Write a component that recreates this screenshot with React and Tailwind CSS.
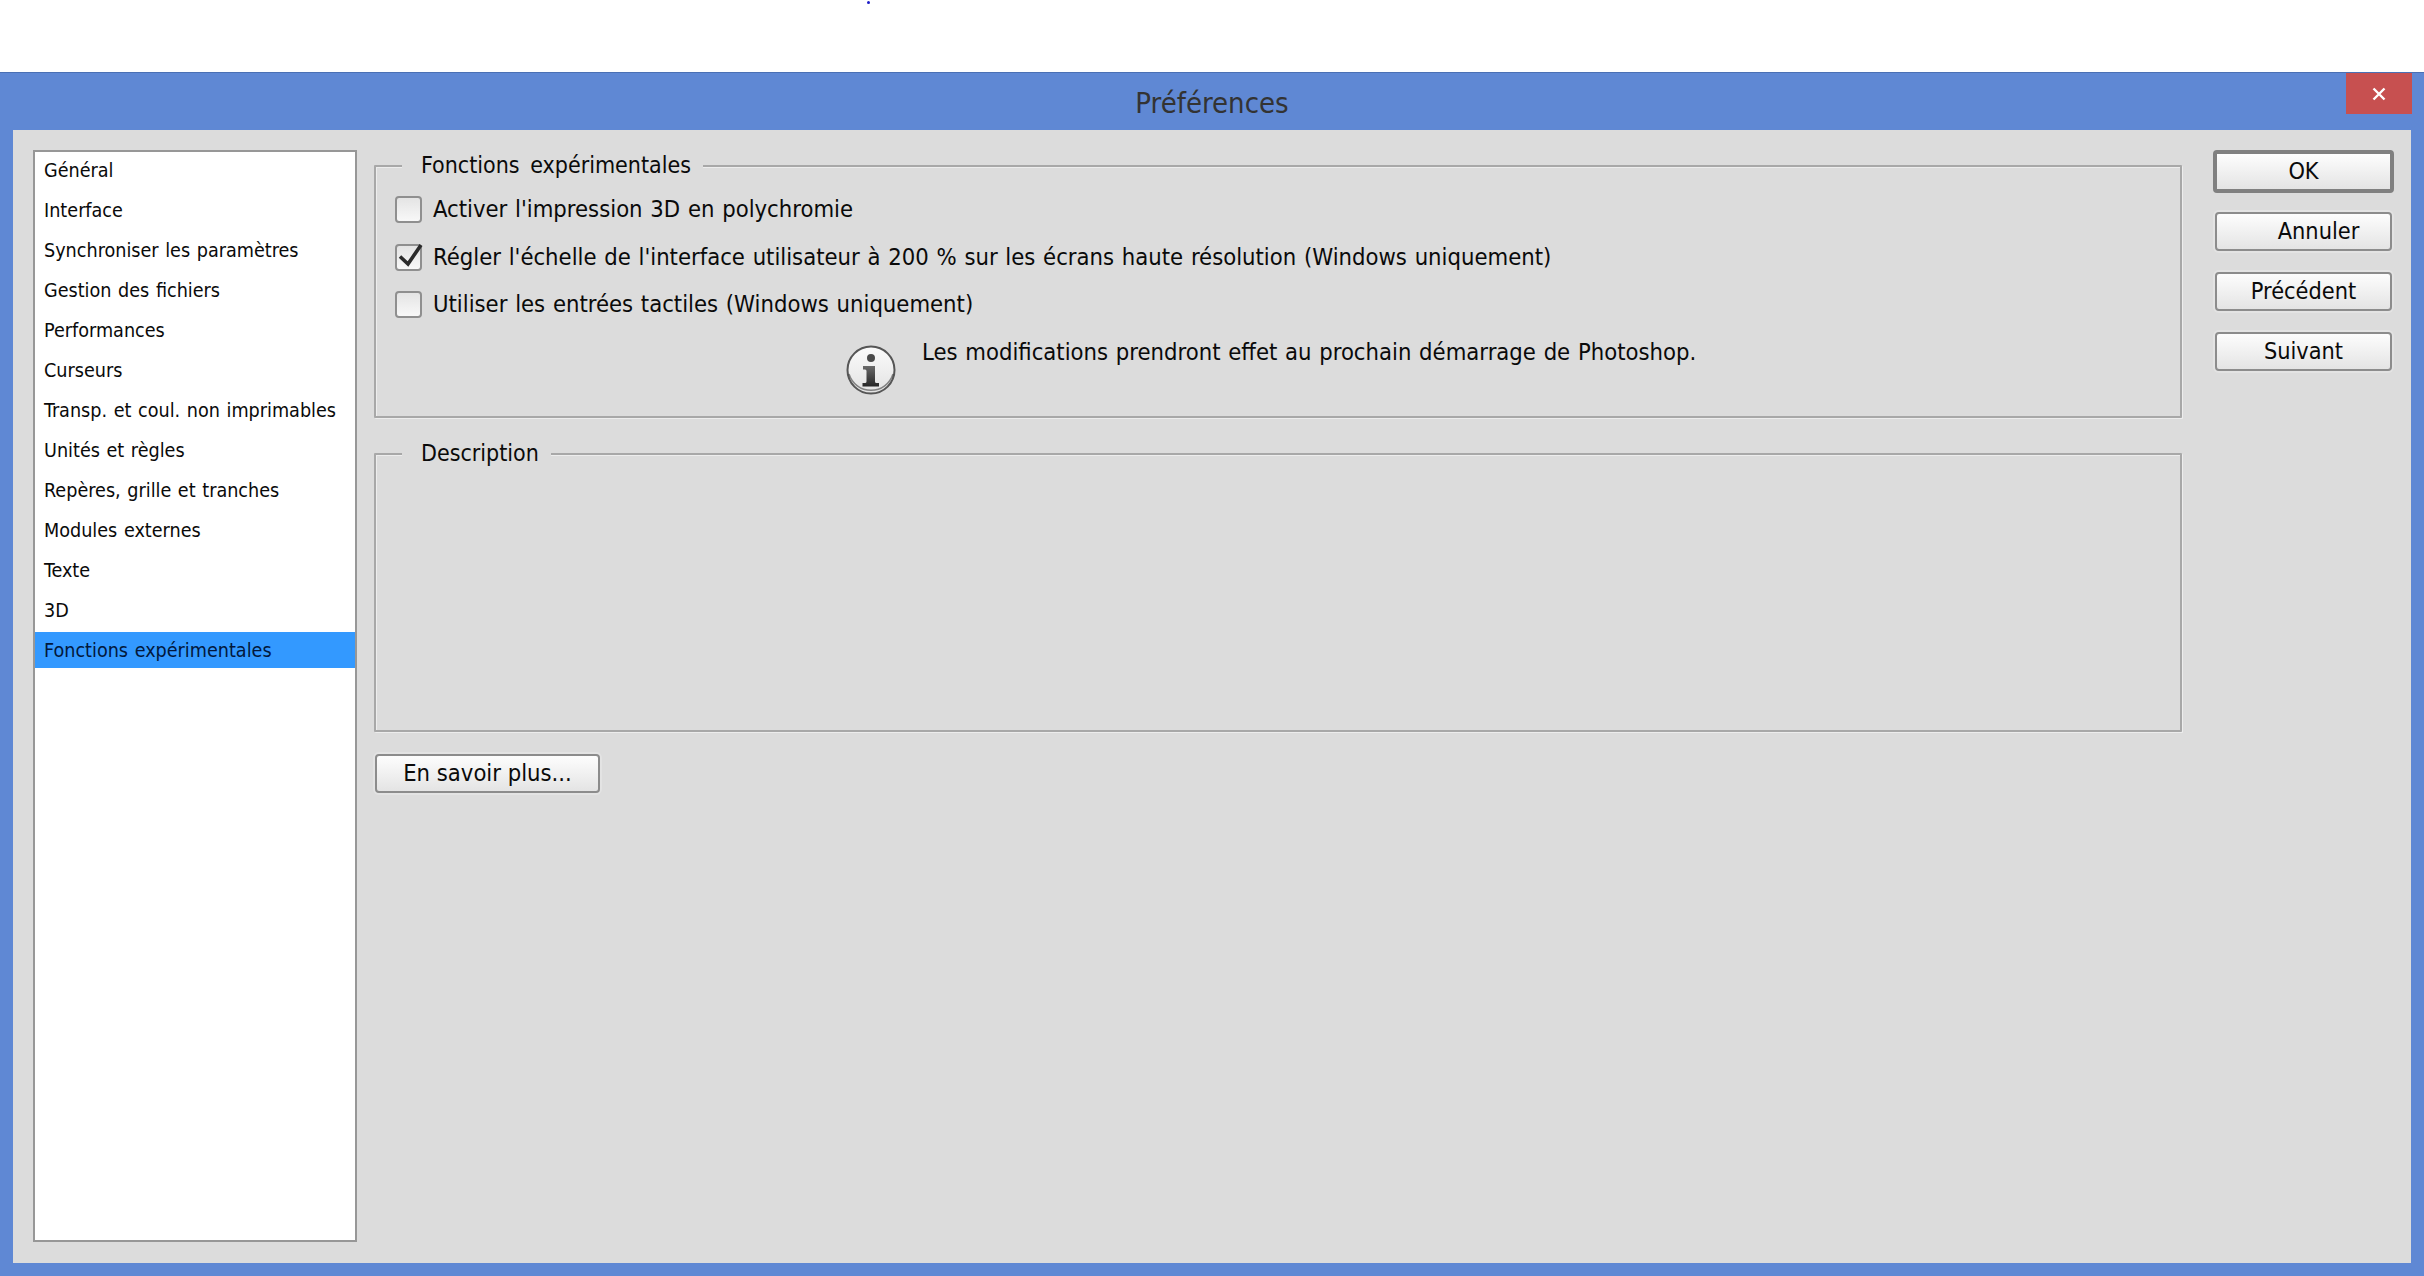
import React from 'react';

const navItems = [
  'Général',
  'Interface',
  'Synchroniser les paramètres',
  'Gestion des fichiers',
  'Performances',
  'Curseurs',
  'Transp. et coul. non imprimables',
  'Unités et règles',
  'Repères, grille et tranches',
  'Modules externes',
  'Texte',
  '3D',
  'Fonctions expérimentales',
];

const fontClass = "font-['DejaVu_Sans',sans-serif] font-stretch-condensed";
const btnClass =
  'flex items-center justify-center rounded-[4px] border-2 border-[#8c8c8c] bg-gradient-to-b from-[#fdfdfd] to-[#e4e4e4] text-[#0a0a0a] shadow-[0_0_0_2px_#e3e3e3]';

function InfoIcon() {
  return (
    <svg width="50" height="50" viewBox="0 0 50 50" className="shrink-0">
      <defs>
        <linearGradient id="infoFill" x1="0" y1="0" x2="0" y2="1">
          <stop offset="0" stopColor="#fbfbfb" />
          <stop offset="1" stopColor="#e2e2e2" />
        </linearGradient>
        <linearGradient id="infoGlyph" x1="0" y1="0" x2="0" y2="1">
          <stop offset="0" stopColor="#6a6a6a" />
          <stop offset="1" stopColor="#262626" />
        </linearGradient>
      </defs>
      <circle cx="25" cy="25" r="23.5" fill="url(#infoFill)" stroke="#565656" strokeWidth="2" />
      <path d="M3 29 A23 23 0 0 0 47 29" fill="none" stroke="#3f3f3f" strokeWidth="1.5" opacity="0.6" />
      <circle cx="25" cy="13" r="4" fill="#4a4a4a" />
      <path d="M17 21h12v15.5q0 1.5 1.5 1.5h2.5v3.5H16.5V38h2.5q1.5 0 1.5-1.5V26q0-1.5-1.5-1.5H17z" fill="url(#infoGlyph)" />
    </svg>
  );
}

function Check({ label, checked }) {
  return (
    <div className="flex h-[27px] items-center">
      <div className="relative h-[27px] w-[27px] shrink-0 rounded-[4px] border-2 border-[#8f8f8f] bg-gradient-to-b from-[#e4e4e4] to-[#f8f8f8]">
        {checked && (
          <svg viewBox="0 0 27 27" className="absolute -left-[2px] -top-[2px] h-[27px] w-[27px] overflow-visible">
            <path d="M5 12.5l8 7.5L26 1" fill="none" stroke="#2b2b2b" strokeWidth="3.6" />
          </svg>
        )}
      </div>
      <span className="ml-[11px] whitespace-nowrap pt-[1px]">{label}</span>
    </div>
  );
}

function GroupBox({ title, className, children }) {
  return (
    <div className={`relative rounded-[1px] border-2 border-[#a8a8a8] shadow-[inset_1px_1px_0_#ededed,1px_1px_0_#ededed] ${className}`}>
      <div className="absolute left-[26px] -top-[17px] h-[30px] whitespace-nowrap bg-[#dcdcdc] pl-[19px] pr-[12px] text-[23px] leading-[30px] [word-spacing:4px]">
        {title}
      </div>
      {children}
    </div>
  );
}

export default function App() {
  return (
    <div className={`relative h-[1276px] w-full bg-white pt-[72px] ${fontClass}`}>
      <div className="absolute left-[867px] top-[1px] h-[3px] w-[3px] rounded-full bg-[#1c1cc8]" />
      <div className="flex h-[1204px] flex-col border-t border-[#4a70b4] bg-[#5f88d4] px-[13px] pb-[13px]">
        {/* title bar */}
        <div className="relative flex h-[57px] shrink-0 items-center justify-center pt-[4px] text-[29px] text-[#333333]">
          Préférences
          <div className="absolute -right-[1px] top-0 flex h-[41px] w-[66px] items-center justify-center bg-[#c75050]">
            <svg width="14" height="14" viewBox="0 0 14 14">
              <path d="M1.5 1.5l11 11M12.5 1.5l-11 11" stroke="#ffffff" strokeWidth="2.4" />
            </svg>
          </div>
        </div>

        <div className="flex flex-1 bg-[#dcdcdc] pb-[21px] pl-[20px] pr-[17px] pt-[20px] text-[23.6px] text-[#0a0a0a] [word-spacing:1px]">
          {/* sidebar */}
          <div className="w-[324px] shrink-0 border-2 border-[#979797] bg-white text-[19.6px] [word-spacing:1px]">
            {navItems.map((item, i) => (
              <div
                key={item}
                className={`mb-[4px] flex h-[36px] items-center whitespace-nowrap pl-[9px] pt-[2px] ${
                  i === navItems.length - 1 ? 'bg-[#3399ff] text-[#02183c]' : 'text-[#0a0a0a]'
                }`}
              >
                {item}
              </div>
            ))}
          </div>

          {/* main */}
          <div className="ml-[17px] flex w-[1808px] shrink-0 flex-col pt-[15px]">
            <GroupBox title="Fonctions expérimentales" className="h-[253px] pl-[19px] pt-[29px]">
              <div className="flex flex-col gap-[20.5px]">
                <Check label="Activer l'impression 3D en polychromie" />
                <Check checked label="Régler l'échelle de l'interface utilisateur à 200 % sur les écrans haute résolution (Windows uniquement)" />
                <Check label="Utiliser les entrées tactiles (Windows uniquement)" />
              </div>
              <div className="ml-[451px] mt-[27px] flex items-start">
                <InfoIcon />
                <span className="-mt-[8px] ml-[26px] whitespace-nowrap leading-[30px]">
                  Les modifications prendront effet au prochain démarrage de Photoshop.
                </span>
              </div>
            </GroupBox>
            <GroupBox title="Description" className="mt-[35px] h-[279px]" />
            <button className={`ml-[1px] mt-[22px] h-[39px] w-[225px] ${btnClass}`}>En savoir plus...</button>
          </div>

          {/* action buttons */}
          <div className="ml-[31px] flex w-[181px] shrink-0 flex-col items-center text-[23.3px] [word-spacing:0]">
            <button className="flex h-[43px] w-[181px] items-center justify-center rounded-[4px] border-[4px] border-[#808080] bg-gradient-to-b from-[#fdfdfd] to-[#e4e4e4] text-[#0a0a0a]">
              OK
            </button>
            <button className={`mt-[19px] h-[39px] w-[177px] pl-[30px] ${btnClass}`}>Annuler</button>
            <button className={`mt-[21px] h-[39px] w-[177px] ${btnClass}`}>Précédent</button>
            <button className={`mt-[21px] h-[39px] w-[177px] ${btnClass}`}>Suivant</button>
          </div>
        </div>
      </div>
    </div>
  );
}
